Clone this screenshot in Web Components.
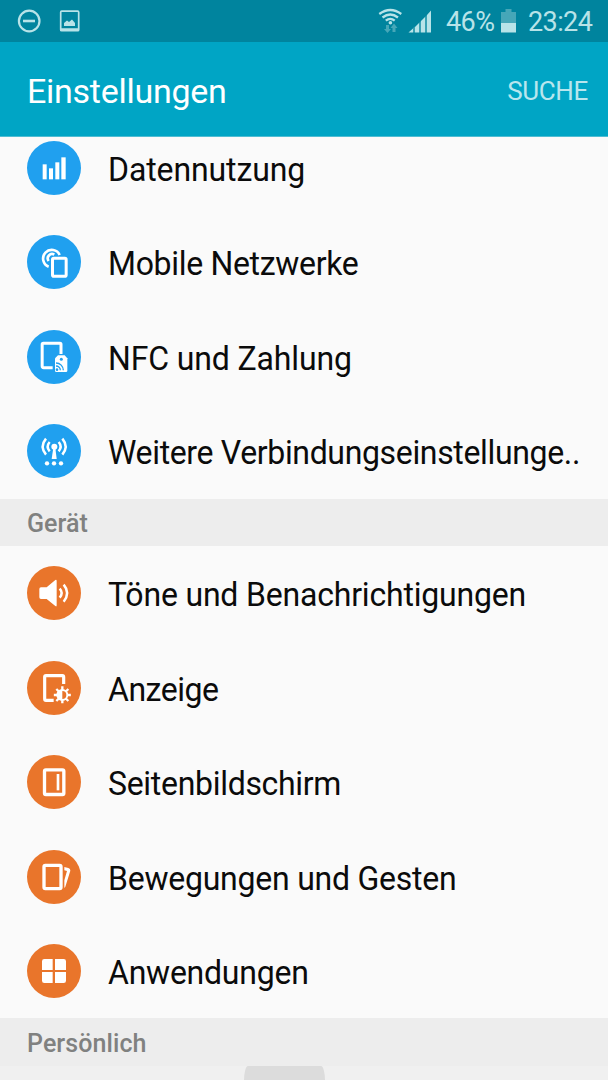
<!DOCTYPE html>
<html lang="de">
<head>
<meta charset="utf-8">
<title>Einstellungen</title>
<style>
html, body { margin: 0; height: 100%; overflow: hidden; background: #fafafa; }
body { font-family: Roboto, "Noto Sans", sans-serif; }
</style>
</head>
<body>
<settings-screen></settings-screen>
<script>
const define = (name, html, setup) => customElements.define(name, class extends HTMLElement {
  constructor() {
    super();
    const t = document.createElement('template');
    t.innerHTML = html;
    this.attachShadow({ mode: 'open' }).append(t.content.cloneNode(true));
  }
  connectedCallback() { if (setup) setup(this, this.shadowRoot); }
});

const icons = {
  data: `<g fill="#fff"><rect x="86" y="109" width="12" height="45"/><rect x="105" y="121" width="12" height="33"/><rect x="124" y="103" width="12" height="51"/><rect x="142" y="88" width="13" height="66"/></g>`,
  mobile: `<g fill="none" stroke="#fff"><path d="M104 134A26 26 0 1 1 137 99" stroke-width="8"/><path d="M104 117A13 13 0 0 1 121 98" stroke-width="8"/><rect x="115.500" y="109" width="41" height="54" rx="4" stroke-width="9"/></g>`,
  nfc: `<path d="M141 111V82Q141 79 138 79H88Q84.500 79 84.500 83V147Q84.500 152 89 152H116" fill="none" stroke="#fff" stroke-width="9"/><path d="M132 115H152L160 124V161Q160 165 156 165H127Q123 165 123 161V124Z" fill="#fff"/><circle cx="142" cy="127" r="4.500" fill="#20a0ef"/><g fill="none" stroke="#20a0ef" stroke-width="4"><path d="M126 138A22 22 0 0 1 148 160M126 147A13 13 0 0 1 139 160"/></g><circle cx="129" cy="158" r="4" fill="#20a0ef"/>`,
  more: `<g fill="#fff"><circle cx="121" cy="107" r="9"/><path d="M118 110H124L128 144H113Z"/><circle cx="99" cy="157" r="6.500"/><circle cx="120" cy="157" r="6.500"/><circle cx="141" cy="157" r="6.500"/></g><g fill="none" stroke="#fff" stroke-width="7.500"><path d="M96 83Q76 107 96 131M145 83Q165 107 145 131M107 93Q95 107 107 121M134 93Q146 107 134 121"/></g>`,
  sound: `<path d="M81 103H98L124 81Q128 79 128 84V157Q128 162 124 159L98 138H81Q76 138 76 133V108Q76 103 81 103Z" fill="#fff"/><g fill="none" stroke="#fff" stroke-width="7.500"><path d="M137 107Q149 120 137 134M149 95Q170 120 149 146"/></g>`,
  display: `<path d="M149 108V87Q149 83 145 83H96Q92 83 92 87V152Q92 157 96 157H119" fill="none" stroke="#fff" stroke-width="9.500"/><g stroke="#fff" stroke-width="7"><path d="M145 115V166M119.500 141H170.500M127 123L163 159M127 159L163 123"/></g><circle cx="145" cy="141" r="18" fill="#fff"/><path d="M145 129A12 12 0 0 1 145 153Z" fill="#e9752b"/>`,
  side: `<rect x="91.500" y="83.500" width="58" height="74" rx="4" fill="none" stroke="#fff" stroke-width="10"/><rect x="128" y="96" width="8" height="49" fill="#fff"/>`,
  motion: `<rect x="90" y="85" width="51" height="70" rx="4" fill="none" stroke="#fff" stroke-width="10"/><path d="M151 90L163 93Q170 95 169 101L154 149Q153 152 151 152V130L159 102L151 100Z" fill="#fff"/>`,
  apps: `<g fill="#fff"><path d="M91 84H116V117H84V91Q84 84 91 84ZM123 84H149Q156 84 156 91V117H123ZM84 123H116V156H91Q84 156 84 149ZM123 123H156V149Q156 156 149 156H123Z"/></g>`
};

define('status-bar', `<style>
:host { display: flex; align-items: center; box-sizing: border-box; height: 42px; padding: 0 15px 0 17px; background: #00849e; color: #b8e3e8; }
svg { display: block; flex: none; }
.space { flex: 1; }
span { font-size: 27px; line-height: 42px; padding-top: 2px; white-space: nowrap; }
.pct { width: 51px; margin-left: 13px; letter-spacing: -.6px; }
.time { width: 65px; margin-left: 11px; letter-spacing: -.6px; }
</style>
<svg width="64" height="42" viewBox="17 0 64 42" fill="none" stroke="#b8e3e8"><circle cx="29.200" cy="21" r="10.300" stroke-width="2.200"/><path d="M23 21H35" stroke-width="2.600"/><rect x="60.700" y="11.200" width="18" height="19.500" rx="1" stroke-width="1.700"/><path d="M60 28.200H79V31H60ZM64 26V23L67 20.500L69 22L72 19.500L75 23V26Z" fill="#b8e3e8" stroke="none"/></svg>
<div class="space"></div>
<svg width="56" height="42" viewBox="377 0 56 42"><g fill="none" stroke="#b8e3e8" stroke-width="2.300"><path d="M379.300 14Q390.300 6 401.300 14M382.500 17.500Q390.300 11.500 398 17.500M385.800 20.700Q390.300 17 394.700 20.700"/></g><circle cx="390.400" cy="22.700" r="1.800" fill="#b8e3e8"/><path d="M386 25H389V29H391L387.500 33L384 29H386ZM392.500 32V28H390.500L394 23.500L397.500 28H395.500V32Z" fill="#46a7b8"/><g fill="#b8e3e8"><path d="M408.500 32.500L413 28.500V32.500ZM415 27L419 23V32.500H415ZM421 21L425 17V32.500H421ZM427 15L431 10.500V32.500H427Z"/><path d="M413 28L415 26.500V32.500H413ZM419 23L421 21V32.500H419ZM425 17L427 15V32.500H425Z" opacity=".3"/></g></svg>
<span class="pct">46%</span>
<svg style="margin-left:3px" width="17" height="42" viewBox="500 0 17 42"><path d="M501 12H505.500V9H511.500V12H516V23H501Z" fill="#46a7b8"/><path d="M501 23H516V32.500H501Z" fill="#b8e3e8"/></svg>
<span class="time">23:24</span>`);

define('app-header', `<style>
:host { display: flex; align-items: center; justify-content: space-between; box-sizing: border-box; height: 95px; padding: 3px 20px 0 27px; background: #00a5c5; border-bottom: 1px solid #4fbdd3; color: #fff; }
.title { font-size: 34px; letter-spacing: -.27px; }
.action { font-size: 26px; letter-spacing: -.35px; color: #b8e6ee; }
</style><span class="title"><slot></slot></span><span class="action"><slot name="action"></slot></span>`);

define('section-header', `<style>
:host { display: flex; align-items: center; box-sizing: border-box; height: 47.25px; padding: 3px 27px 0; background: #ededed; color: #808180; font-size: 25px; font-weight: 500; letter-spacing: .08px; }
</style><slot></slot>`);

define('settings-item', `<style>
:host { display: flex; align-items: center; box-sizing: border-box; height: 94.5px; padding-left: 27px; gap: 27px; color: #0b0b0b; }
svg { display: block; flex: none; width: 54px; height: 54px; }
span { font-size: 33px; padding-top: 3px; white-space: nowrap; letter-spacing: var(--track, -.25px); transform: scaleX(.97); transform-origin: 0 50%; }
</style><svg viewBox="39 39 162 162"></svg><span><slot></slot></span>`, (el, root) => {
  const color = el.getAttribute('tone') === 'device' ? '#e9752b' : '#20a0ef';
  root.querySelector('svg').innerHTML = `<circle cx="120" cy="120" r="81" fill="${color}"/>` + icons[el.getAttribute('icon')];
});

define('edge-handle', `<style>
:host { display: block; height: 15px; background: #f0f0f0; overflow: hidden; }
div { width: 81px; height: 30px; margin-left: 244px; border-radius: 4px 4px 0 0 / 15px 15px 0 0; background: #dcdcdc; }
</style><div></div>`);

define('settings-screen', `<style>
:host { display: flex; flex-direction: column; height: 1080px; width: 608px; overflow: hidden; background: #fafafa; }
main { flex: 1; min-height: 0; overflow: hidden; }
.list { margin-top: -16.45px; }
</style>
<status-bar></status-bar>
<app-header>Einstellungen<span slot="action">SUCHE</span></app-header>
<main><div class="list">
<settings-item icon="data" style="--track:-.12px">Datennutzung</settings-item>
<settings-item icon="mobile" style="--track:-.33px">Mobile Netzwerke</settings-item>
<settings-item icon="nfc" style="--track:-.15px">NFC und Zahlung</settings-item>
<settings-item icon="more" style="--track:-.36px">Weitere Verbindungseinstellunge..</settings-item>
<section-header>Gerät</section-header>
<settings-item tone="device" icon="sound" style="--track:-.2px">Töne und Benachrichtigungen</settings-item>
<settings-item tone="device" icon="display" style="--track:-.5px">Anzeige</settings-item>
<settings-item tone="device" icon="side" style="--track:-.32px">Seitenbildschirm</settings-item>
<settings-item tone="device" icon="motion">Bewegungen und Gesten</settings-item>
<settings-item tone="device" icon="apps">Anwendungen</settings-item>
<section-header>Persönlich</section-header>
<edge-handle></edge-handle>
</div></main>`);
</script>
</body>
</html>
